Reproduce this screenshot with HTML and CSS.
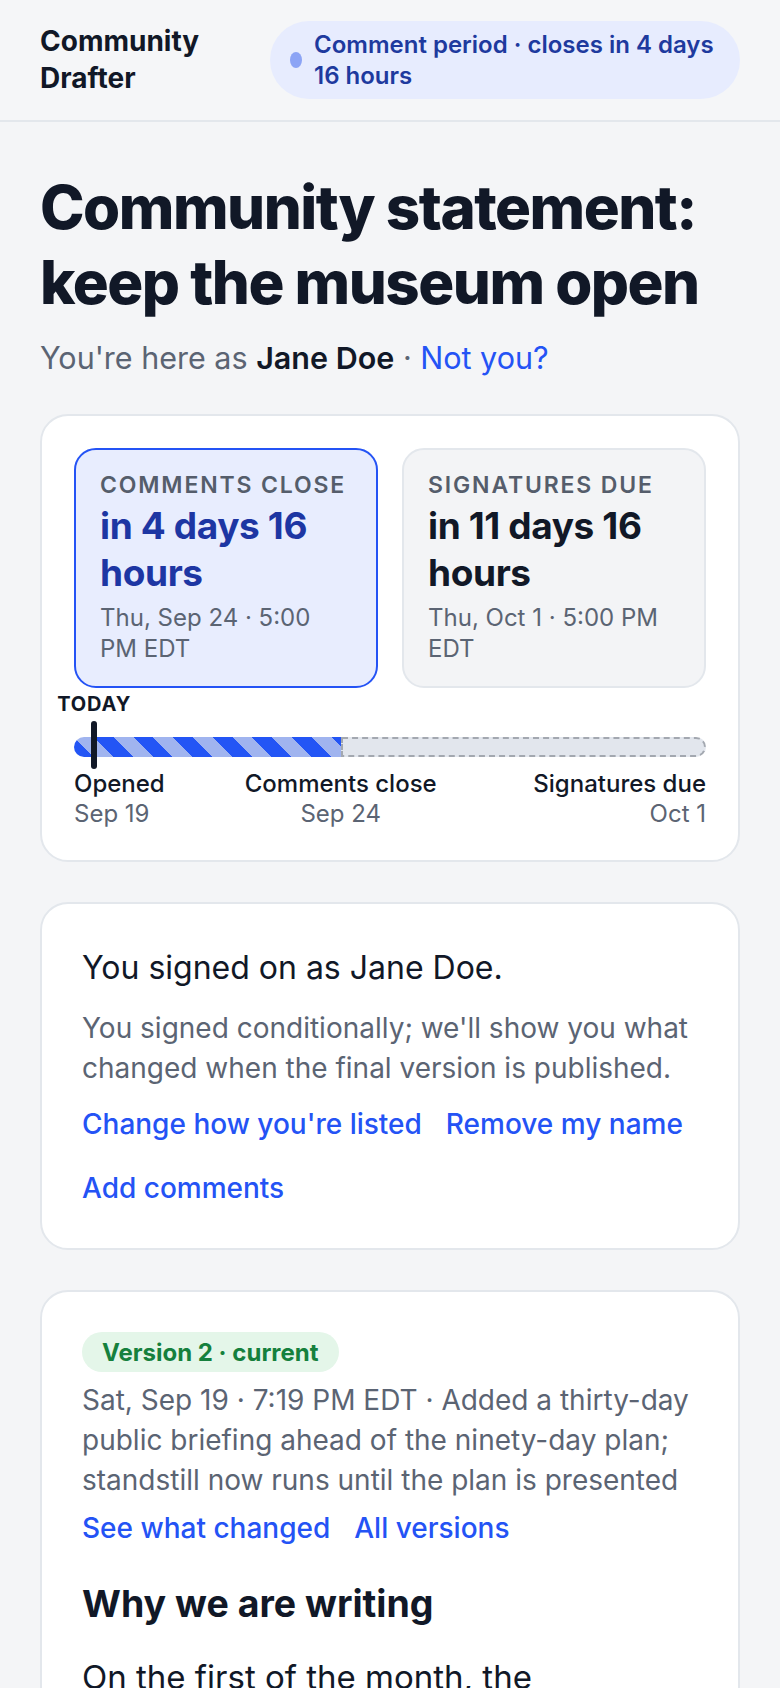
FILE: index.html
```html
<!DOCTYPE html>
<html>
<head lang="en">
    <meta charset="UTF-8">
    <title>Community Drafter</title>
    <meta name="viewport" content="width=device-width, initial-scale=1.0"/>
    <link rel="stylesheet" href="styles.css">
</head>
<body>
    <header class="topbar">
        <div class="brand">Community Drafter</div>
        <div class="status">
            <span class="status-dot"></span>
            <span>Comment period · closes in 4 days 16 hours</span>
        </div>
    </header>
    <main class="page">
        <h1 class="title">Community statement: keep the museum open</h1>
        <p class="whoami">You're here as <strong>Jane Doe</strong> · <a href="#">Not you?</a></p>

        <section class="card">
            <div class="deadlines">
                <div class="deadline is-active">
                    <div class="deadline-label">Comments close</div>
                    <div class="deadline-value">in 4 days 16 hours</div>
                    <div class="deadline-date">Thu, Sep 24 · 5:00 PM EDT</div>
                </div>
                <div class="deadline">
                    <div class="deadline-label">Signatures due</div>
                    <div class="deadline-value">in 11 days 16 hours</div>
                    <div class="deadline-date">Thu, Oct 1 · 5:00 PM EDT</div>
                </div>
            </div>
            <div class="timeline">
                <div class="tl-today"><span style="left:3.2%">Today</span></div>
                <div class="tl-track">
                    <div class="tl-done" style="width:42.2%"></div>
                    <div class="tl-rest"></div>
                    <span class="tl-marker" style="left:3.2%"></span>
                </div>
                <div class="tl-points">
                    <div class="tl-point"><b>Opened</b><small>Sep 19</small></div>
                    <div class="tl-point tl-mid" style="left:42.2%"><b>Comments close</b><small>Sep 24</small></div>
                    <div class="tl-point tl-end"><b>Signatures due</b><small>Oct 1</small></div>
                </div>
            </div>
        </section>

        <section class="card roomy">
            <p class="signed-title">You signed on as Jane Doe.</p>
            <p class="muted">You signed conditionally; we'll show you what changed when the final version is published.</p>
            <div class="actions">
                <a href="#">Change how you're listed</a>
                <a href="#">Remove my name</a>
                <a href="#">Add comments</a>
            </div>
        </section>

        <section class="card roomy">
            <div class="badge">Version 2 · current</div>
            <p class="muted version-meta">Sat, Sep 19 · 7:19 PM EDT · Added a thirty-day public briefing ahead of the ninety-day plan; standstill now runs until the plan is presented</p>
            <div class="actions tight">
                <a href="#">See what changed</a>
                <a href="#">All versions</a>
            </div>
            <h2 class="section-title">Why we are writing</h2>
            <p class="body-text">On the first of the month, the administration announced that the museum would close its doors at the end of the season.</p>
        </section>
    </main>
</body>
</html>
```

FILE: styles.css
```css
* {
    box-sizing: border-box;
}
html,body{
    margin: 0;
    padding: 0;
}
body{
    background: #f4f5f7;
    color: #111827;
    font-family: Inter, "Noto Sans", sans-serif;
}
a{
    color: #2453f5;
    text-decoration: none;
}

/* top bar */
.topbar{
    display: flex;
    align-items: center;
    justify-content: space-between;
    gap: 24px;
    height: 122px;
    padding: 0 40px;
    border-bottom: 2px solid #e3e7ec;
    background: #f5f6f8;
}
.brand{
    font-size: 28px;
    line-height: 37px;
    font-weight: 700;
}
.status{
    flex: none;
    display: flex;
    align-items: center;
    gap: 12px;
    max-width: 470px;
    padding: 8px 20px;
    border-radius: 999px;
    background: #e7ecfe;
    color: #1e3a9e;
    font-size: 24px;
    line-height: 31px;
    font-weight: 600;
}
.status-dot{
    flex: none;
    width: 12px;
    height: 16px;
    border-radius: 50%;
    background: #8ca4f5;
}

/* page */
.page{
    padding: 48px 40px 40px;
}
.title{
    margin: 0;
    font-size: 60px;
    line-height: 75px;
    font-weight: 800;
    letter-spacing: -0.025em;
}
.whoami{
    margin: 18px 0 36px;
    font-size: 30.5px;
    line-height: 40px;
    color: #5b6473;
}
.whoami strong{
    color: #111827;
    font-weight: 600;
}

.card{
    background: #fff;
    border: 2px solid #e3e7ec;
    border-radius: 28px;
    padding: 32px 32px 31px;
    margin-bottom: 40px;
}
.card.roomy{
    padding: 40px;
}

/* deadlines */
.deadlines{
    display: grid;
    grid-template-columns: 1fr 1fr;
    gap: 24px;
}
.deadline{
    border: 2px solid #e3e7ec;
    border-radius: 22px;
    background: #f3f4f6;
    padding: 20px 26px 22px 24px;
}
.deadline.is-active{
    border-color: #2453f5;
    background: #e8edfe;
}
.deadline-label{
    font-size: 23px;
    line-height: 30px;
    font-weight: 600;
    letter-spacing: 0.08em;
    text-transform: uppercase;
    color: #555d6b;
}
.deadline-value{
    margin-top: 2px;
    font-size: 37px;
    line-height: 47px;
    font-weight: 700;
    letter-spacing: -0.01em;
}
.is-active .deadline-value{
    color: #1d36a3;
}
.deadline-date{
    margin-top: 6px;
    font-size: 24px;
    line-height: 31px;
    color: #5b6473;
}

/* timeline */
.timeline{
    margin-top: 5px;
}
.tl-today{
    position: relative;
    height: 22px;
}
.tl-today span{
    position: absolute;
    top: 0;
    transform: translateX(-50%);
    font-size: 20px;
    line-height: 22px;
    font-weight: 700;
    letter-spacing: 0.04em;
    text-transform: uppercase;
}
.tl-track{
    position: relative;
    display: flex;
    height: 20px;
    margin-top: 22px;
}
.tl-done{
    border-radius: 10px 0 0 10px;
    background: repeating-linear-gradient(45deg, #2355f5 0 14px, #a0b4ef 14px 28px);
}
.tl-rest{
    flex: 1;
    border: 2px dashed #a3a8b0;
    border-radius: 0 10px 10px 0;
    background: #e2e6ed;
}
.tl-marker{
    position: absolute;
    top: -16px;
    width: 6px;
    height: 48px;
    margin-left: -3px;
    border-radius: 3px;
    background: #111827;
}
.tl-points{
    position: relative;
    display: flex;
    justify-content: space-between;
    margin-top: 12px;
    font-size: 24px;
    line-height: 30px;
}
.tl-point b{
    display: block;
    font-weight: 500;
}
.tl-point small{
    display: block;
    font-size: 24px;
    color: #5b6473;
}
.tl-mid{
    position: absolute;
    top: 0;
    transform: translateX(-50%);
    text-align: center;
    white-space: nowrap;
}
.tl-end{
    text-align: right;
}

/* signed card */
.signed-title{
    margin: 0;
    font-size: 32px;
    line-height: 48px;
}
.muted{
    margin: 16px 0 0;
    font-size: 28px;
    line-height: 40px;
    color: #5b6473;
}
.actions{
    display: flex;
    flex-wrap: wrap;
    gap: 24px 24px;
    margin-top: 16px;
    font-size: 28px;
    line-height: 40px;
}
.actions a{
    font-weight: 500;
}
.actions.tight{
    margin-top: 8px;
}

/* version card */
.badge{
    display: flex;
    align-items: center;
    width: fit-content;
    height: 40px;
    padding: 0 20px;
    border-radius: 999px;
    background: #e4f6e9;
    color: #15803d;
    font-size: 24px;
    font-weight: 700;
}
.version-meta{
    margin-top: 8px;
}
.section-title{
    margin: 32px 0 0;
    font-size: 37.5px;
    line-height: 47px;
    font-weight: 700;
}
.body-text{
    margin: 24px 0 0;
    font-size: 33px;
    line-height: 52px;
}
```
